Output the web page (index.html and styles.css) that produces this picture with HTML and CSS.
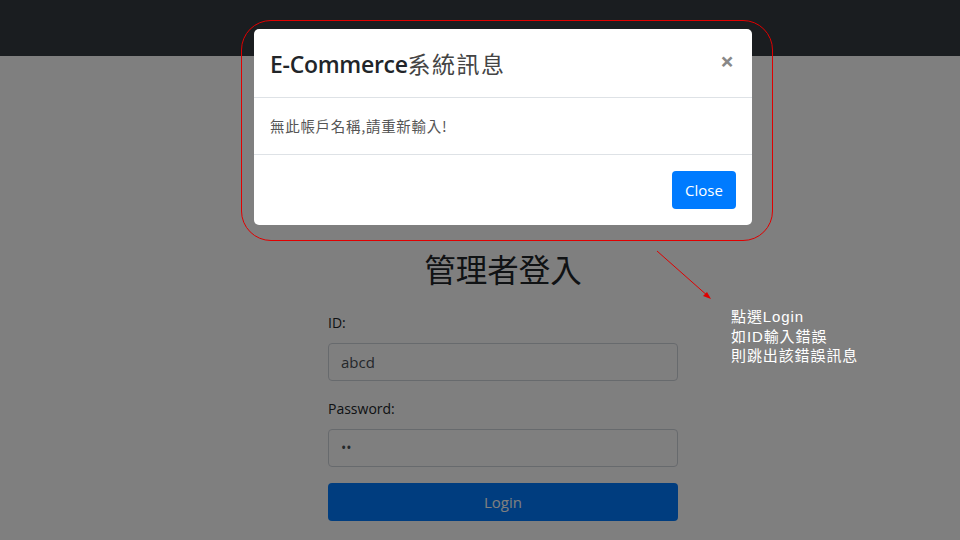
FILE: index.html
```html
<!DOCTYPE html>
<html lang="zh-Hant">
<head>
<meta charset="utf-8">
<title>Login</title>
<link rel="stylesheet" href="styles.css">
</head>
<body>
<nav class="navbar"></nav>
<main class="login">
  <h2 class="login-title">管理者登入</h2>
  <div class="form-group">
    <label class="label">ID:</label>
    <div class="input">abcd</div>
  </div>
  <div class="form-group">
    <label class="label">Password:</label>
    <div class="input dots">••</div>
  </div>
  <button class="btn-login">Login</button>
</main>

<div class="backdrop"></div>

<div class="modal">
  <div class="modal-header">
    <h4 class="modal-title">E-Commerce<span class="title-cjk">系統訊息</span></h4>
    <span class="modal-x">×</span>
  </div>
  <div class="modal-body">無此帳戶名稱,請重新輸入!</div>
  <div class="modal-footer">
    <button class="btn-close">Close</button>
  </div>
</div>

<div class="highlight"></div>
<svg class="arrow" width="80" height="70" viewBox="0 0 80 70">
  <line x1="2" y1="2" x2="54" y2="48" stroke="#e00000" stroke-width="1"/>
  <polygon points="56,50 48,47 52,43" fill="#e00000"/>
</svg>
<div class="note">點選Login<br>如ID輸入錯誤<br>則跳出該錯誤訊息</div>
</body>
</html>
```
FILE: styles.css
```css
html, body {
  margin: 0;
  padding: 0;
}
body {
  width: 960px;
  height: 540px;
  overflow: hidden;
  background: #ffffff;
  font-family: "Open Sans", "Noto Sans CJK TC", sans-serif;
  color: #212529;
  position: relative;
}
.navbar {
  height: 56px;
  background: #343a40;
}
.login {
  width: 350px;
  margin: 193px 0 0 328px;
  display: flex;
  flex-direction: column;
}
.login-title {
  margin: 0 0 24px 0;
  text-align: center;
  font-family: "Noto Sans CJK TC", sans-serif;
  font-weight: 400;
  font-size: 31.5px;
  line-height: 38px;
  color: #212529;
}
.form-group {
  margin-bottom: 16px;
  display: flex;
  flex-direction: column;
}
.label {
  font-size: 14px;
  line-height: 24px;
  margin-bottom: 8px;
}
.input {
  height: 38px;
  box-sizing: border-box;
  border: 1px solid #ced4da;
  border-radius: 4px;
  padding: 0 12px;
  font-size: 15px;
  line-height: 36px;
  color: #495057;
  background: #fff;
}
.dots {
  font-size: 14px;
  letter-spacing: 0;
}
.btn-login {
  height: 38px;
  border: 0;
  border-radius: 4px;
  background: #007bff;
  color: #fff;
  font-family: "Open Sans", sans-serif;
  font-size: 15px;
}
.backdrop {
  position: absolute;
  inset: 0;
  background: rgba(0, 0, 0, 0.5);
}
.modal {
  position: absolute;
  left: 254px;
  top: 29px;
  width: 498px;
  background: #fff;
  border-radius: 5px;
  display: flex;
  flex-direction: column;
}
.modal-header {
  display: flex;
  align-items: flex-start;
  justify-content: space-between;
  padding: 16px 16px 15px 16px;
  border-bottom: 1px solid #dee2e6;
}
.modal-title {
  margin: 0;
  font-size: 23px;
  line-height: 36px;
  font-weight: 600;
  color: #212529;
  letter-spacing: -0.3px;
}
.title-cjk {
  font-family: "Noto Sans CJK TC", sans-serif;
  font-weight: 400;
  font-size: 23px;
  letter-spacing: 1.5px;
  color: #444;
}
.modal-x {
  font-size: 24px;
  font-weight: 700;
  color: #888;
  line-height: 28px;
  margin-top: 2px;
  margin-right: 2px;
}
.modal-body {
  padding: 16px;
  font-family: "Noto Sans CJK TC", sans-serif;
  font-size: 14.5px;
  line-height: 24px;
  letter-spacing: 0.7px;
  color: #555;
  border-bottom: 1px solid #dee2e6;
}
.modal-footer {
  display: flex;
  justify-content: flex-end;
  padding: 16px 16px 16px 16px;
}
.btn-close {
  width: 64px;
  height: 38px;
  border: 0;
  border-radius: 4px;
  background: #007bff;
  color: #fff;
  font-family: "Open Sans", sans-serif;
  font-size: 15px;
}
.highlight {
  position: absolute;
  left: 241px;
  top: 20px;
  width: 532px;
  height: 221px;
  box-sizing: border-box;
  border: 1px solid #e00000;
  border-radius: 30px;
}
.arrow {
  position: absolute;
  left: 655px;
  top: 249px;
}
.note {
  position: absolute;
  left: 731px;
  top: 307px;
  color: #fff;
  font-family: "Liberation Sans", "Noto Sans CJK TC", sans-serif;
  font-size: 15px;
  line-height: 19.5px;
  letter-spacing: 0.9px;
}
```
